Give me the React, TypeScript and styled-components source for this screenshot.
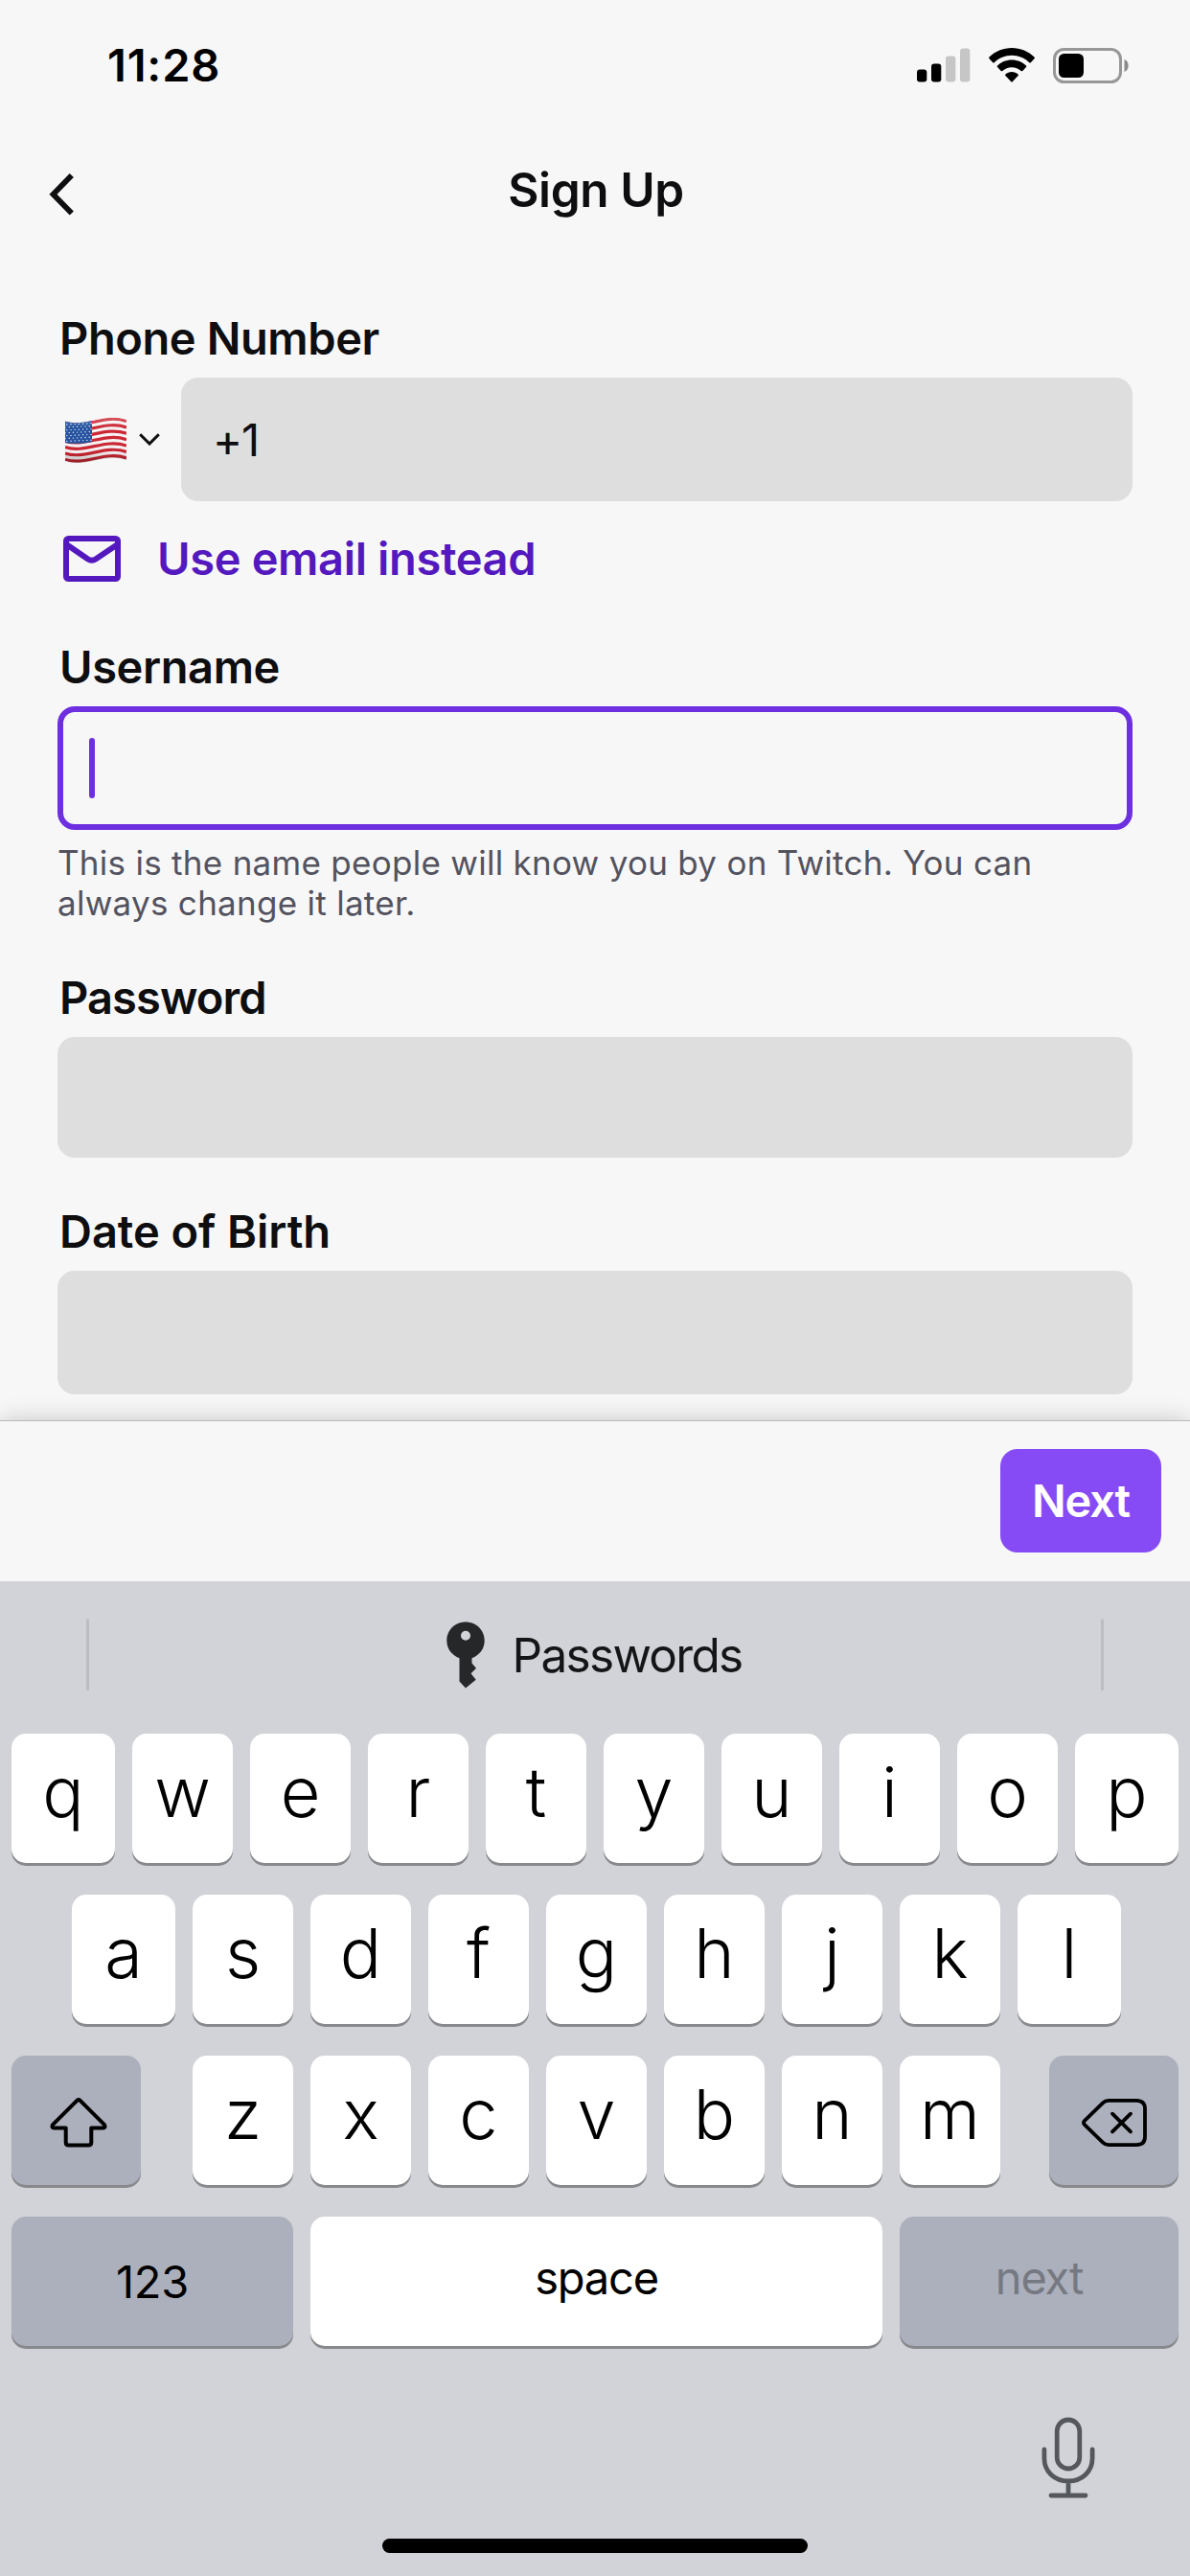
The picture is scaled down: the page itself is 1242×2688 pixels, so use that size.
import React from "react";
import styled, { createGlobalStyle, css } from "styled-components";

const GlobalStyle = createGlobalStyle`
  * { box-sizing: border-box; }
  html, body { margin: 0; padding: 0; background: #f7f7f7; }
  body { font-family: Inter, Roboto, "Liberation Sans", sans-serif; }
  svg { display: block; flex: none; }
`;

const Screen = styled.div`
  display: flex;
  flex-direction: column;
  width: 1242px;
  height: 2688px;
  overflow: hidden;
  background: #f7f7f7;
  color: #0e0e10;
`;

const StatusBar = styled.div`
  display: flex;
  align-items: center;
  justify-content: space-between;
  height: 136px;
  padding: 0 64px 0 112px;
`;

const Clock = styled.div`
  font-size: 47px;
  line-height: 58px;
  font-weight: 600;
  letter-spacing: 0.8px;
  color: #000;
`;

const StatusIcons = styled.div`
  display: flex;
  align-items: center;
  gap: 19px;
`;

const NavBar = styled.div`
  display: grid;
  grid-template-columns: 160px 1fr 160px;
  align-items: center;
  height: 124px;
`;

const BackButton = styled.div`
  padding: 10px 0 0 51px;
`;

const Title = styled.div`
  padding-left: 2px;
  text-align: center;
  font-size: 49.5px;
  line-height: 60px;
  font-weight: 600;
  letter-spacing: -0.4px;
`;

const Form = styled.div`
  display: flex;
  flex-direction: column;
  height: 1222px;
  padding: 64px 60px 0;
`;

const Field = styled.div<{ $gap?: number }>`
  display: flex;
  flex-direction: column;
  gap: 12px;
  margin-top: ${(p) => p.$gap ?? 0}px;
`;

const Label = styled.div<{ $tracking?: number }>`
  padding-left: 2px;
  font-size: 47px;
  line-height: 58px;
  font-weight: 600;
  letter-spacing: ${(p) => p.$tracking ?? -0.4}px;
`;

const PhoneRow = styled.div`
  display: flex;
  align-items: center;
`;

const Country = styled.div`
  display: flex;
  align-items: center;
  width: 129px;
  padding-left: 8px;
  gap: 13px;
`;

const Input = styled.div<{ $height?: number; $active?: boolean }>`
  display: flex;
  flex: 1 0 auto;
  align-items: center;
  height: ${(p) => p.$height ?? 129}px;
  padding: 0 33px;
  border-radius: 18px;
  background: #dedede;
  font-size: 47px;
  line-height: 58px;
  letter-spacing: -1px;
  ${(p) =>
    p.$active &&
    css`
      padding: 0 27px;
      border: 6px solid #6e2fe0;
      background: #f7f7f7;
    `}
`;

const Caret = styled.span`
  width: 6px;
  height: 63px;
  border-radius: 3px;
  background: #6e2fe0;
`;

const EmailLink = styled.div`
  display: flex;
  align-items: center;
  gap: 38px;
  height: 58px;
  margin-top: 31px;
  padding-left: 6px;
  font-size: 47px;
  line-height: 58px;
  font-weight: 600;
  letter-spacing: -0.35px;
  color: #5419be;
`;

const Hint = styled.div`
  margin-top: 1px;
  font-size: 35px;
  line-height: 42px;
  letter-spacing: 0.28px;
  color: #53535f;
`;

const Footer = styled.div`
  display: flex;
  justify-content: flex-end;
  height: 168px;
  padding: 29px 30px 0;
  border-top: 1px solid #b8b8b8;
  background: #f7f7f7;
  box-shadow: 0 0 24px rgba(0, 0, 0, 0.2);
`;

const NextButton = styled.div`
  width: 168px;
  height: 108px;
  border-radius: 18px;
  background: #874bf6;
  color: #fff;
  font-size: 47px;
  line-height: 108px;
  font-weight: 600;
  letter-spacing: -1.2px;
  text-align: center;
`;

const Keyboard = styled.div`
  display: flex;
  flex-direction: column;
  height: 1038px;
  background: #d2d3d8;
  color: #000;
`;

const Suggestions = styled.div`
  display: flex;
  align-items: center;
  justify-content: space-between;
  height: 159px;
  padding: 0 90px 6px;
`;

const Divider = styled.div`
  width: 3px;
  height: 75px;
  border-radius: 2px;
  background: #bcbdc2;
`;

const PasswordsEntry = styled.div`
  display: flex;
  align-items: center;
  gap: 29px;
  padding-right: 2px;
  font-size: 49.5px;
  line-height: 60px;
  letter-spacing: -1.7px;
  color: #141516;
`;

const Rows = styled.div`
  display: flex;
  flex-direction: column;
  gap: 33px;
`;

const KeyRow = styled.div<{ $left?: number; $right?: number }>`
  display: flex;
  justify-content: space-between;
  padding: 0 ${(p) => p.$right ?? 12}px 0 ${(p) => p.$left ?? 12}px;
`;

const LetterGroup = styled.div`
  display: flex;
  gap: 18px;
  padding-left: 3px;
`;

const Key = styled.div<{ $w?: number; $dark?: boolean }>`
  display: flex;
  justify-content: center;
  width: ${(p) => p.$w ?? 105}px;
  height: 135px;
  border-radius: 15px;
  background: ${(p) => (p.$dark ? "#acb0bc" : "#fff")};
  box-shadow: 0 3px 0 #88898d;
`;

const LetterKey = styled(Key)`
  font-size: 72px;
  font-weight: 350;
  line-height: 122px;
`;

const IconKey = styled(Key)<{ $shift?: number }>`
  align-items: center;
  padding: 4px 0 0 ${(p) => p.$shift ?? 0}px;
`;

const WordKey = styled(Key)<{ $muted?: boolean; $line?: number; $tracking?: number }>`
  color: ${(p) => (p.$muted ? "#767982" : "#000")};
  font-size: 47px;
  line-height: ${(p) => p.$line ?? 127}px;
  letter-spacing: ${(p) => p.$tracking ?? -1.2}px;
`;

const BottomBar = styled.div`
  display: flex;
  flex: 1;
  flex-direction: column;
  align-items: center;
  justify-content: space-between;
  padding: 74px 99px 24px;
`;

const MicSlot = styled.div`
  align-self: flex-end;
`;

const HomeIndicator = styled.div`
  width: 444px;
  height: 15px;
  border-radius: 8px;
  background: #000;
`;

const Signal = () => (
  <svg width="56" height="36" viewBox="0 0 56 36">
    <rect x="0" y="22.5" width="10.3" height="13" rx="3" fill="#000" />
    <rect x="15" y="16.5" width="10.3" height="19" rx="3" fill="#000" />
    <rect x="30" y="8.5" width="10.3" height="27" rx="3" fill="#c6c6c6" />
    <rect x="45" y="0.5" width="10.3" height="35" rx="3" fill="#c6c6c6" />
  </svg>
);

const Wifi = () => (
  <svg width="48" height="36" viewBox="0 0 48 36">
    <path d="M24 0C33 0 41.500 3.600 47.500 9.500Q48.300 10.300 47.500 11.200L43.800 15.200Q43 16 42.200 15.200C37.500 10.500 31 7.700 24 7.700S10.500 10.500 5.800 15.200Q5 16 4.200 15.200L.5 11.200Q-.3 10.300 .5 9.500C6.500 3.600 15 0 24 0Z" />
    <path d="M24 12.500C29.900 12.500 35.200 14.800 39 18.600Q39.700 19.300 39 20L35.300 24Q34.500 24.700 33.700 24C31.100 21.600 27.700 20.200 24 20.200S16.900 21.600 14.300 24Q13.500 24.700 12.700 24L9 20Q8.300 19.300 9 18.600C12.800 14.800 18.100 12.500 24 12.500Z" />
    <path d="M24 25C26.600 25 28.900 25.900 30.600 27.500Q31.300 28.200 30.600 28.900L24.700 35.300Q24 36 23.300 35.300L17.400 28.900Q16.700 28.200 17.400 27.500C19.100 25.900 21.400 25 24 25Z" />
  </svg>
);

const Battery = () => (
  <svg width="79" height="37" viewBox="0 0 79 37">
    <rect x="1.500" y="1.500" width="69" height="34" rx="10" fill="none" stroke="#979797" strokeWidth="3" />
    <rect x="6" y="6" width="26" height="25" rx="5.500" fill="#000" />
    <path d="M74.500 12C77.300 13.200 78.600 15.600 78.600 18.500S77.300 23.800 74.500 25Z" fill="#8a8a8a" />
  </svg>
);

const BackIcon = () => (
  <svg width="27" height="44" viewBox="0 0 27 44" fill="none" stroke="#0e0e10" strokeWidth="5.800">
    <path d="M23.800 2L4.500 21.800L23.800 41.600" />
  </svg>
);

const stripes = [0, 1, 2, 3, 4, 5, 6];
const starRows = [0, 1, 2, 3, 4, 5, 6];

const Flag = () => (
  <svg width="64" height="50" viewBox="0 0 64 50">
    <defs>
      <clipPath id="flag">
        <path d="M0 5.500C20 12.500 42 -4 64 4V46C42 38.500 20 54 0 47Z" />
      </clipPath>
      <linearGradient id="fold" x1="0" x2="0" y1="0" y2="1">
        <stop offset="0" stopColor="#fff" stopOpacity=".25" />
        <stop offset=".25" stopColor="#fff" stopOpacity="0" />
        <stop offset=".75" stopColor="#000" stopOpacity=".02" />
        <stop offset="1" stopColor="#000" stopOpacity=".28" />
      </linearGradient>
    </defs>
    <g clipPath="url(#flag)">
      <rect width="64" height="50" fill="#f6f4f6" />
      {stripes.map((i) => (
        <path
          key={i}
          d="M0 5C20 12 42 -4.500 64 3.500"
          transform={`translate(0 ${2 + i * 6.4})`}
          fill="none"
          stroke="#cc2733"
          strokeWidth="3.200"
        />
      ))}
      <path d="M0 0H28V27C19 29 9 29.500 0 28Z" fill="#2553a0" />
      {starRows.map((r) =>
        stripes.map((c) => (
          <circle
            key={`${r}-${c}`}
            cx={1.8 + c * 4.2 - (r % 2) * 1.8}
            cy={9 + r * 2.9 - c * 0.2}
            r="0.720"
            fill="#e8edf6"
          />
        ))
      )}
      <rect width="64" height="50" fill="url(#fold)" />
    </g>
  </svg>
);

const ChevronDown = () => (
  <svg width="22" height="13" viewBox="0 0 22 13" fill="none" stroke="#0e0e10" strokeWidth="3">
    <path d="M1.200 1.300L11 11L20.800 1.300" />
  </svg>
);

const MailIcon = () => (
  <svg width="60" height="48" viewBox="0 0 60 48" fill="none" stroke="#5419be" strokeWidth="6">
    <rect x="3" y="3" width="54" height="42" rx="2.500" />
    <path d="M4 9.500L25.500 24.200Q29.800 27 34.100 24.200L56 9.500" />
  </svg>
);

const KeyIcon = () => (
  <svg width="40" height="70" viewBox="0 0 40 70" fill="#262729">
    <path
      fillRule="evenodd"
      d="M20 0.500C31 0.500 39.700 9 39.700 19.800C39.700 28.500 34.500 35.300 26.500 38.200V43.500L31 48.700L25.500 54.300L30.700 60.800L20 69.500L13.500 62.500V38.200C5.500 35.300 0.300 28.500 0.300 19.800C0.300 9 9 0.500 20 0.500ZM20 9.800A5 5 0 1 0 20 19.800A5 5 0 1 0 20 9.800Z"
    />
  </svg>
);

const ShiftIcon = () => (
  <svg width="60" height="52" viewBox="0 0 60 52" fill="none" stroke="#000" strokeWidth="4" strokeLinejoin="round">
    <path d="M28.600 2.600Q30 1.500 31.400 2.600L57 28.200Q58.500 31.500 55.500 31.500H43.300V46.500Q43.300 49.600 40.300 49.600H19.700Q16.700 49.600 16.700 46.500V31.500H4.500Q1.500 31.500 3 28.200Z" />
  </svg>
);

const DeleteIcon = () => (
  <svg width="68" height="50" viewBox="0 0 68 50" fill="none" stroke="#000" strokeWidth="3.800" strokeLinecap="round" strokeLinejoin="round">
    <path d="M28 1.900H57Q66 1.900 66 10.500V39.500Q66 48.100 57 48.100H28Q24.500 48.100 22 45.700L3 27.200Q1 25 3 22.800L22 4.300Q24.500 1.900 28 1.900Z" />
    <path d="M32 15.700L51 34.300M51 15.700L32 34.300" />
  </svg>
);

const MicIcon = () => (
  <svg width="56" height="86" viewBox="0 0 56 86" fill="none" stroke="#54575c" strokeWidth="4.800" strokeLinecap="round">
    <rect x="16.200" y="3" width="23.600" height="51" rx="11.800" />
    <path d="M2.900 34V43C2.900 57 13.500 67 28 67S53.100 57 53.100 43V34M28 67V82M10 82H46" />
  </svg>
);

const firstRow = "qwertyuiop".split("");
const secondRow = "asdfghjkl".split("");
const thirdRow = "zxcvbnm".split("");

export default function App() {
  return (
    <Screen>
      <GlobalStyle />
      <StatusBar>
        <Clock>11:28</Clock>
        <StatusIcons>
          <Signal />
          <Wifi />
          <Battery />
        </StatusIcons>
      </StatusBar>
      <NavBar>
        <BackButton>
          <BackIcon />
        </BackButton>
        <Title>Sign Up</Title>
      </NavBar>
      <Form>
        <Field>
          <Label>Phone Number</Label>
          <PhoneRow>
            <Country>
              <Flag />
              <ChevronDown />
            </Country>
            <Input>+1</Input>
          </PhoneRow>
        </Field>
        <EmailLink>
          <MailIcon />
          <span>Use email instead</span>
        </EmailLink>
        <Field $gap={55}>
          <Label>Username</Label>
          <Input $active>
            <Caret />
          </Input>
          <Hint>
            This is the name people will know you by on Twitch. You can
            <br />
            always change it later.
          </Hint>
        </Field>
        <Field $gap={49}>
          <Label $tracking={-0.9}>Password</Label>
          <Input $height={126} />
        </Field>
        <Field $gap={48}>
          <Label $tracking={-0.05}>Date of Birth</Label>
          <Input />
        </Field>
      </Form>
      <Footer>
        <NextButton>Next</NextButton>
      </Footer>
      <Keyboard>
        <Suggestions>
          <Divider />
          <PasswordsEntry>
            <KeyIcon />
            <span>Passwords</span>
          </PasswordsEntry>
          <Divider />
        </Suggestions>
        <Rows>
          <KeyRow>
            {firstRow.map((k, i) => (
              <LetterKey key={k} $w={i === 0 || i === 9 ? 108 : 105}>
                {k}
              </LetterKey>
            ))}
          </KeyRow>
          <KeyRow $left={75} $right={72}>
            {secondRow.map((k, i) => (
              <LetterKey key={k} $w={i === 0 || i === 8 ? 108 : 105}>
                {k}
              </LetterKey>
            ))}
          </KeyRow>
          <KeyRow>
            <IconKey $w={135} $dark $shift={4}>
              <ShiftIcon />
            </IconKey>
            <LetterGroup>
              {thirdRow.map((k) => (
                <LetterKey key={k}>{k}</LetterKey>
              ))}
            </LetterGroup>
            <IconKey $w={135} $dark>
              <DeleteIcon />
            </IconKey>
          </KeyRow>
          <KeyRow>
            <WordKey $w={294} $dark $line={135} $tracking={-0.3}>
              123
            </WordKey>
            <WordKey $w={597}>space</WordKey>
            <WordKey $w={291} $dark $muted>
              next
            </WordKey>
          </KeyRow>
        </Rows>
        <BottomBar>
          <MicSlot>
            <MicIcon />
          </MicSlot>
          <HomeIndicator />
        </BottomBar>
      </Keyboard>
    </Screen>
  );
}
